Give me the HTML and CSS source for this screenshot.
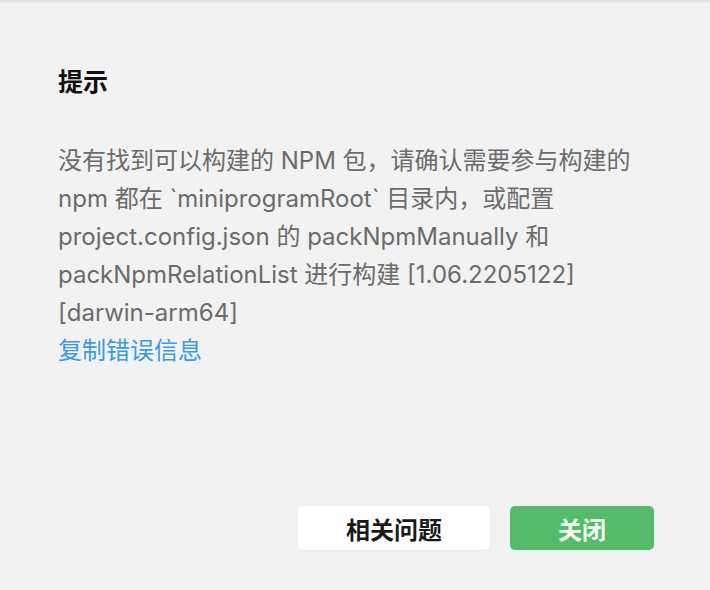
FILE: index.html
```html
<!DOCTYPE html>
<html lang="zh-CN">
<head>
    <meta charset="UTF-8">
    <meta name="viewport" content="width=device-width, initial-scale=1.0">
    <title>提示</title>
    <link rel="stylesheet" href="styles.css">
</head>
<body>

<div class="dialog">
    <h1 class="title">提示</h1>
    <div class="message">
        没有找到可以构建的 NPM 包，请确认需要参与构建的<br>
        npm 都在 `miniprogramRoot` 目录内，或配置<br>
        project.config.json 的 packNpmManually 和<br>
        packNpmRelationList 进行构建 [1.06.2205122]<br>
        [darwin-arm64]
    </div>
    <a class="copy" href="#">复制错误信息</a>

    <div class="actions">
        <button class="btn btn-plain">相关问题</button>
        <button class="btn btn-primary">关闭</button>
    </div>
</div>

</body>
</html>
```

FILE: styles.css
```css
html, body {
    height: 100%;
}
body {
    margin: 0;
    padding: 0;
    background: #f2f2f2;
    font-family: Inter, "Noto Sans CJK SC", sans-serif;
    color: #1a1a1a;
}
.dialog {
    box-sizing: border-box;
    height: 590px;
    border-top: 2px solid #e3e3e3;
    box-shadow: inset 0 1px 0 #ebebeb;
    padding: 63px 56px 0 58px;
    display: flex;
    flex-direction: column;
}
.title {
    margin: 0;
    font-size: 25px;
    line-height: 34px;
    font-weight: 700;
    color: #111;
}
.message {
    margin-top: 43px;
    font-size: 24px;
    line-height: 38px;
    color: #6b6b6b;
}
.copy {
    display: block;
    font-size: 24px;
    line-height: 38px;
    color: #3b9ae0;
    text-decoration: none;
}
.actions {
    margin-top: auto;
    margin-bottom: 40px;
    display: flex;
    justify-content: flex-end;
    gap: 20px;
}
.btn {
    height: 44px;
    border: none;
    border-radius: 5px;
    font-family: inherit;
    font-size: 24px;
    font-weight: 600;
    cursor: pointer;
}
.btn-plain {
    width: 192px;
    background: #fff;
    color: #1a1a1a;
    box-shadow: 0 1px 2px rgba(0, 0, 0, 0.06);
}
.btn-primary {
    width: 144px;
    background: #55bb6a;
    color: #f4fff4;
}
```
